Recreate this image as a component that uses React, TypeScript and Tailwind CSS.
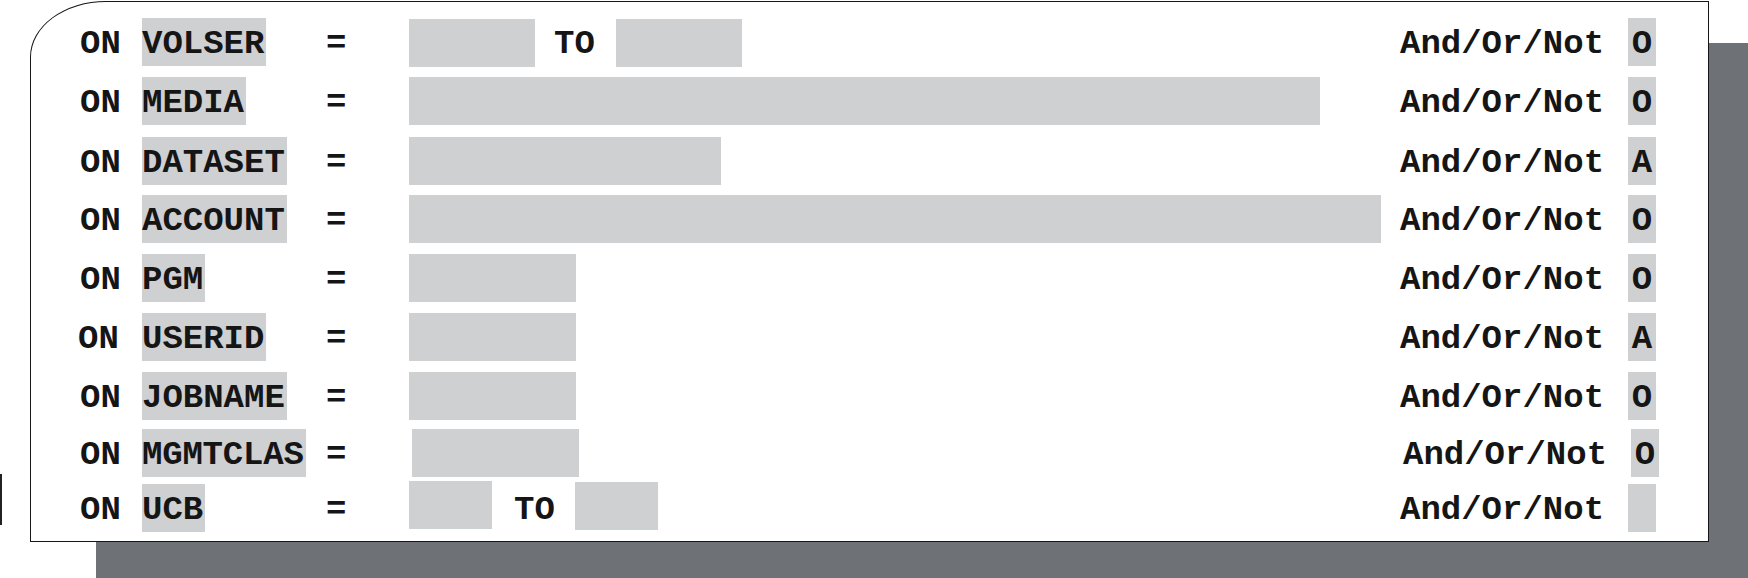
import React from "react";

type Row = {
  label: string;
  value: string;
  mt: string;
  onShift?: string;
  inputShift?: string;
  rightShift?: string;
  kind: "range" | "single" | "rangeSmall";
  w?: string;
};

const rows: Row[] = [
  { label: "VOLSER", value: "O", mt: "mt-[16px]", kind: "range" },
  { label: "MEDIA", value: "O", mt: "mt-[11px]", kind: "single", w: "w-[911px]" },
  { label: "DATASET", value: "A", mt: "mt-[12px]", kind: "single", w: "w-[312px]" },
  { label: "ACCOUNT", value: "O", mt: "mt-[10px]", kind: "single", w: "w-[972px]" },
  { label: "PGM", value: "O", mt: "mt-[11px]", kind: "single", w: "w-[167px]" },
  { label: "USERID", value: "A", mt: "mt-[11px]", kind: "single", w: "w-[167px]", onShift: "-ml-[2px] mr-[2px]" },
  { label: "JOBNAME", value: "O", mt: "mt-[11px]", kind: "single", w: "w-[167px]" },
  { label: "MGMTCLAS", value: "O", mt: "mt-[9px]", kind: "single", w: "w-[167px]", inputShift: "ml-[3px]", rightShift: "ml-[3px]" },
  { label: "UCB", value: "", mt: "mt-[7px]", kind: "rangeSmall" },
];

const gray = "bg-[#cfd0d2]";

function Inputs({ r }: { r: Row }) {
  if (r.kind === "range") {
    return (
      <div className="flex items-center">
        <div className={`w-[126px] h-[48px] ${gray}`} />
        <div className="ml-[19px] w-[41px] leading-[48px] pt-[2px]">TO</div>
        <div className={`ml-[21px] w-[126px] h-[48px] ${gray}`} />
      </div>
    );
  }
  if (r.kind === "rangeSmall") {
    return (
      <div className="flex items-start -mt-[3px]">
        <div className={`w-[83px] h-[48px] ${gray}`} />
        <div className="ml-[22px] w-[41px] leading-[48px] pt-[5px]">TO</div>
        <div className={`ml-[20px] w-[83px] h-[48px] mt-[1px] ${gray}`} />
      </div>
    );
  }
  return <div className={`${r.w} h-[48px] ${gray} ${r.inputShift ?? ""}`} />;
}

export default function App() {
  return (
    <div
      className="relative w-[1748px] h-[578px] bg-white overflow-hidden text-[#151515] font-bold text-[34px]"
      style={{ fontFamily: '"Liberation Mono", "DejaVu Sans Mono", monospace' }}
    >
      <div className="absolute left-[96px] top-[43px] w-[1720px] h-[600px] bg-[#6e7276]" />
      <div className="absolute left-0 top-[474px] w-[2px] h-[51px] bg-[#222]" />
      <div className="relative ml-[30px] mt-[1px] w-[1679px] h-[541px] bg-white border border-[#161616] rounded-tl-[76px_56px] flex flex-col">
        {rows.map((r) => (
          <div key={r.label} className={`flex items-start h-[48px] pl-[49px] ${r.mt}`}>
            <div className={`w-[62px] shrink-0 leading-[48px] pt-[2px] ${r.onShift ?? ""}`}>ON</div>
            <div className="w-[184px] shrink-0">
              <span
                className={`inline-block h-[48px] leading-[48px] pt-[2px] pr-[2px] ${gray} ${
                  r.label === "MGMTCLAS" ? "tracking-[-0.2px]" : ""
                }`}
              >
                {r.label}
              </span>
            </div>
            <div className="w-[83px] shrink-0 leading-[48px] pt-[2px]">=</div>
            <div className="w-[991px] shrink-0">
              <Inputs r={r} />
            </div>
            <div className={`flex items-start ${r.rightShift ?? ""}`}>
              <div className="w-[228px] shrink-0 leading-[48px] pt-[2px] whitespace-nowrap">And/Or/Not</div>
              <div className={`w-[28px] h-[48px] ${gray} leading-[48px] pt-[2px] text-center`}>{r.value}</div>
            </div>
          </div>
        ))}
      </div>
    </div>
  );
}
